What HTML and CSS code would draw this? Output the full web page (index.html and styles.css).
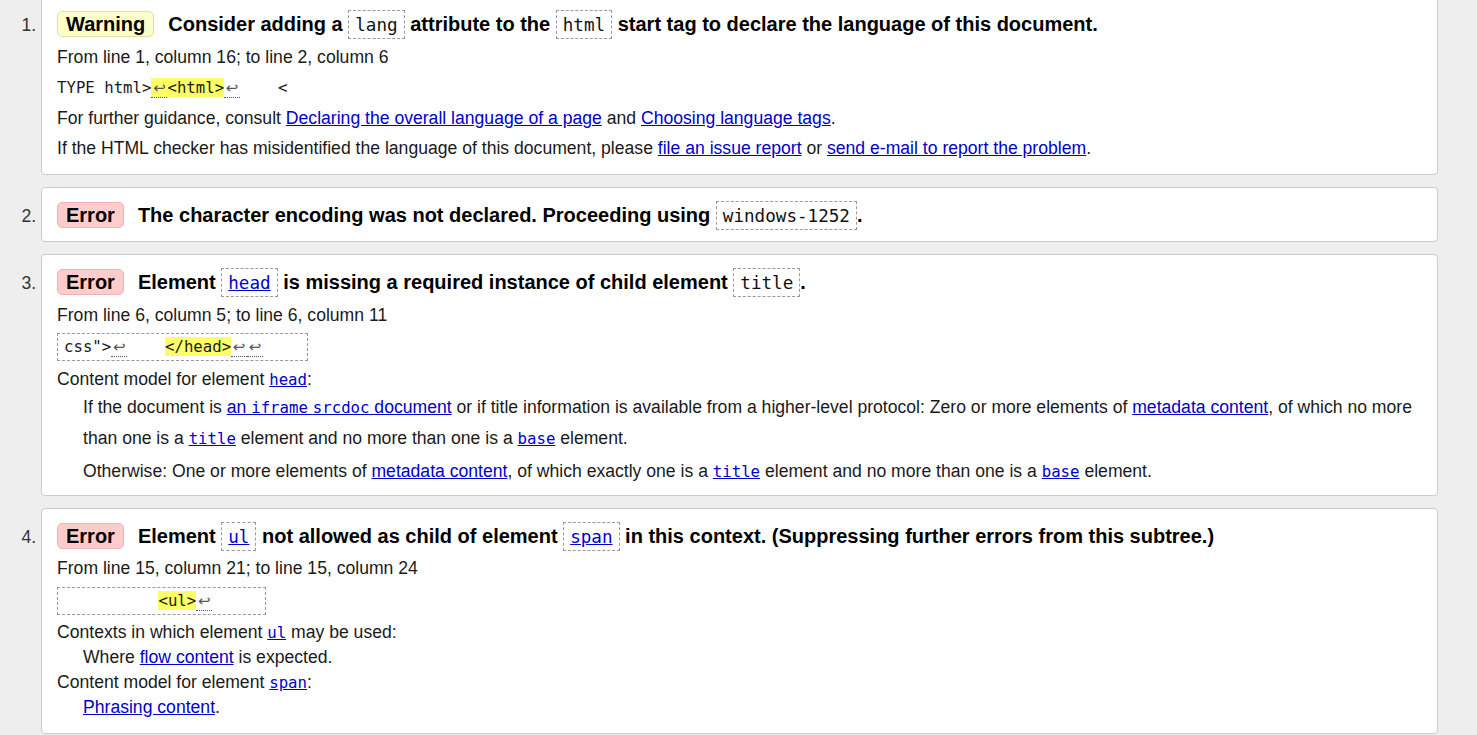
FILE: index.html
```html
<!DOCTYPE html>
<html lang="en">
<head>
<meta charset="utf-8">
<title>Validation results</title>
<link rel="stylesheet" href="styles.css">
</head>
<body>
<ol class="results">
  <li class="msg">
    <p class="title"><strong class="badge warn">Warning</strong><span class="text">Consider adding a <code class="t">lang</code> attribute to the <code class="t">html</code> start tag to declare the language of this document.</span></p>
    <p class="line">From line 1, column 16; to line 2, column 6</p>
    <p class="extract"><code class="x plain">TYPE html&gt;<b class="hl"><span class="lf">↩</span>&lt;html&gt;</b><span class="lf">↩</span>    &lt;</code></p>
    <p class="line">For further guidance, consult <a href="#">Declaring the overall language of a page</a> and <a href="#">Choosing language tags</a>.</p>
    <p class="line">If the HTML checker has misidentified the language of this document, please <a href="#">file an issue report</a> or <a href="#">send e-mail to report the problem</a>.</p>
  </li>
  <li class="msg">
    <p class="title"><strong class="badge err">Error</strong><span class="text">The character encoding was not declared. Proceeding using <code class="t">windows-1252</code>.</span></p>
  </li>
  <li class="msg">
    <p class="title"><strong class="badge err">Error</strong><span class="text">Element <code class="t"><a href="#">head</a></code> is missing a required instance of child element <code class="t">title</code>.</span></p>
    <p class="line">From line 6, column 5; to line 6, column 11</p>
    <p class="extract"><code class="x">css"&gt;<span class="lf">↩</span>    <b class="hl">&lt;/head&gt;</b><span class="lf">↩</span><span class="lf">↩</span>    </code></p>
    <dl class="model model-p">
      <dt>Content model for element <a href="#"><code>head</code></a>:</dt>
      <dd>
        <p>If the document is <a href="#">an <code>iframe</code> <code>srcdoc</code> document</a> or if title information is available from a higher-level protocol: Zero or more elements of <a href="#">metadata content</a>, of which no more than one is a <a href="#"><code>title</code></a> element and no more than one is a <a href="#"><code>base</code></a> element.</p>
        <p>Otherwise: One or more elements of <a href="#">metadata content</a>, of which exactly one is a <a href="#"><code>title</code></a> element and no more than one is a <a href="#"><code>base</code></a> element.</p>
      </dd>
    </dl>
  </li>
  <li class="msg">
    <p class="title"><strong class="badge err">Error</strong><span class="text">Element <code class="t"><a href="#">ul</a></code> not allowed as child of element <code class="t"><a href="#">span</a></code> in this context. (Suppressing further errors from this subtree.)</span></p>
    <p class="line">From line 15, column 21; to line 15, column 24</p>
    <p class="extract"><code class="x">          <b class="hl">&lt;ul&gt;</b><span class="lf">↩</span>     </code></p>
    <dl class="model">
      <dt>Contexts in which element <a href="#"><code>ul</code></a> may be used:</dt>
      <dd>Where <a href="#">flow content</a> is expected.</dd>
      <dt>Content model for element <a href="#"><code>span</code></a>:</dt>
      <dd><a href="#">Phrasing content</a>.</dd>
    </dl>
  </li>
</ol>
</body>
</html>
```
FILE: styles.css
```css
html {
  overflow: hidden;
}

body {
  margin: 0;
  background: #eeeeee;
  font-family: "Liberation Sans", Arial, sans-serif;
  font-size: 17.6px;
  color: #1a1a1a;
}

a {
  color: #0000cc;
}

code {
  font-family: "DejaVu Sans Mono", "Liberation Mono", monospace;
  font-size: 15.7px;
}

.results {
  margin: -4px 0 0;
  padding: 0 39px 0 41px;
}

.msg {
  background: #ffffff;
  border: 1px solid #cccccc;
  border-radius: 4px;
  padding: 12px 15px 8px;
  margin: 0 0 12px;
}

.msg::marker {
  color: #333333;
}

.title {
  height: 30px;
  line-height: 30px;
  margin: 0 0 3px;
  font-size: 20px;
  font-weight: bold;
  color: #000000;
  white-space: nowrap;
}

.badge {
  display: inline-block;
  line-height: 24px;
  padding: 0 8px;
  border: 1px solid;
  border-radius: 5px;
  margin-right: 14px;
  font-weight: bold;
}

.badge.warn {
  background: #ffffcc;
  border-color: #e2dea6;
}

.badge.err {
  background: #ffcccc;
  border-color: #edb4b4;
}

.title code.t {
  display: inline-block;
  font-size: 17.6px;
  font-weight: normal;
  line-height: 22px;
  padding: 3px 6px 2px;
  border: 1px dashed #999999;
  color: #111111;
}

.line {
  margin: 5.5px 0 5px;
  line-height: 25px;
}

.extract {
  margin: 5.5px 0 5px;
}

.x {
  display: block;
  width: fit-content;
  white-space: pre;
  line-height: 26px;
  padding: 0 6px;
  border: 1px dashed #999999;
  color: #1a1a1a;
}

.x.plain {
  line-height: 25px;
  padding: 0;
  border: none;
}

.hl {
  font-weight: normal;
  background: #ffff66;
}

.lf {
  display: inline-block;
  width: 16px;
  line-height: 17px;
  font-family: "DejaVu Sans", sans-serif;
  font-size: 15px;
  text-align: center;
  color: #555555;
  border-bottom: 1px dotted #555555;
  vertical-align: baseline;
}

.model {
  margin: 5.5px 0 5px;
  line-height: 25px;
}

.model dt,
.model dd {
  margin: 0;
}

.model dd {
  margin-left: 26px;
}

.model-p {
  margin-bottom: 0;
}

.model-p dd p {
  margin: 2px 0 0;
  line-height: 31px;
}

.model-p dd p:first-child {
  margin-top: 0;
}
```
